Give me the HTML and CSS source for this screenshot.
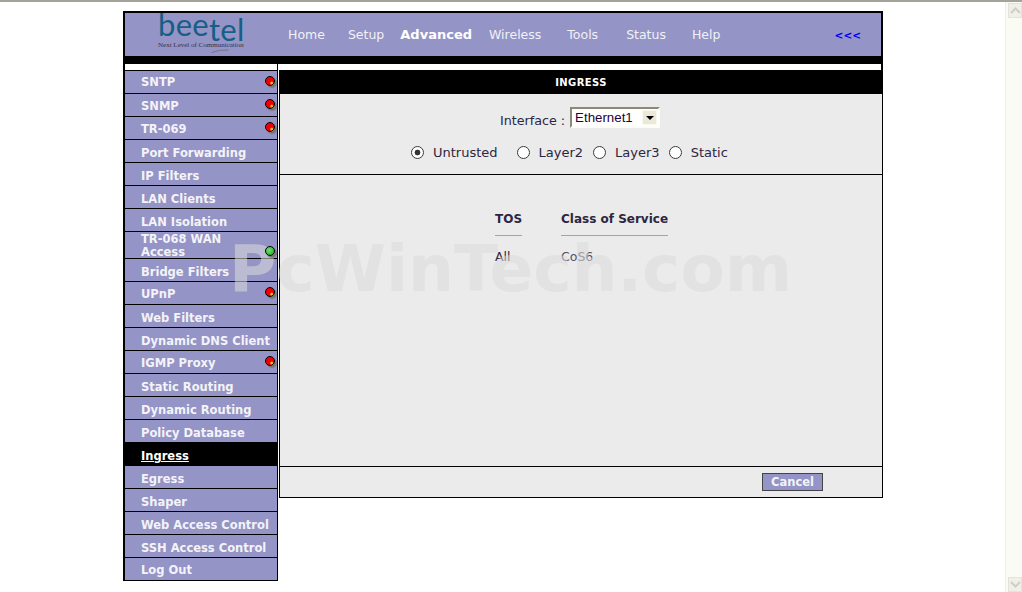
FILE: index.html
```html
<!DOCTYPE html>
<html>
<head>
  <title>Ingress</title>
  <link rel="stylesheet" href="styles.css">
</head>
<body>

  <div class="window">
    <div class="page">
      <div class="frame">

        <div class="header">
          <div class="logo">
            <div class="logo-word">bee<span class="logo-tail">tel</span></div>
            <div class="logo-tag">Next Level of Communication</div>
            <svg class="logo-swoosh" width="18" height="4" viewBox="0 0 18 4"><path d="M0.5 3.5 Q8 0.5 17.5 1" fill="none" stroke="#666" stroke-width="0.7"/></svg>
          </div>
          <ul class="nav">
            <li class="nav-home">Home</li>
            <li class="nav-setup">Setup</li>
            <li class="nav-advanced">Advanced</li>
            <li class="nav-wireless">Wireless</li>
            <li class="nav-tools">Tools</li>
            <li class="nav-status">Status</li>
            <li class="nav-help">Help</li>
          </ul>
          <a class="collapse">&lt;&lt;&lt;</a>
        </div>
        <div class="band"></div>
        <div class="strip"><div class="strip-left"></div></div>

        <div class="columns">
          <ul class="side">
            <li class="first">SNTP<i class="led"></i></li>
            <li class="up">SNMP<i class="led"></i></li>
            <li class="up">TR-069<i class="led"></i></li>
            <li>Port Forwarding</li>
            <li>IP Filters</li>
            <li>LAN Clients</li>
            <li>LAN Isolation</li>
            <li class="tall">TR-068 WAN Access<i class="led green"></i></li>
            <li>Bridge Filters</li>
            <li class="up">UPnP<i class="led"></i></li>
            <li>Web Filters</li>
            <li>Dynamic DNS Client</li>
            <li class="up">IGMP Proxy<i class="led"></i></li>
            <li>Static Routing</li>
            <li>Dynamic Routing</li>
            <li>Policy Database</li>
            <li class="current">Ingress</li>
            <li>Egress</li>
            <li>Shaper</li>
            <li>Web Access Control</li>
            <li>SSH Access Control</li>
            <li class="up">Log Out</li>
          </ul>

          <div class="main">
            <div class="title">INGRESS</div>
            <div class="form">
              <div class="iface">
                <span class="iface-label">Interface :</span>
                <div class="select">
                  <span class="select-value">Ethernet1</span>
                  <span class="select-arrow"></span>
                </div>
              </div>
              <div class="radios">
                <label class="radio-first"><input type="radio" name="kind" checked>Untrusted</label>
                <label><input type="radio" name="kind">Layer2</label>
                <label class="radio-third"><input type="radio" name="kind">Layer3</label>
                <label><input type="radio" name="kind">Static</label>
              </div>
            </div>
            <div class="content">
              <table class="tos">
                <tr><th>TOS</th><th>Class of Service</th></tr>
                <tr><td class="dark">All</td><td>CoS6</td></tr>
              </table>
            </div>
            <div class="footer">
              <button class="cancel">Cancel</button>
            </div>
          </div>
        </div>

      </div>
      <div class="watermark">PcWinTech.com</div>
    </div>

    <div class="scrollbar">
      <div class="scroll-btn"><svg width="11" height="7" viewBox="0 0 11 7"><path d="M1 6 L5.5 1.5 L10 6" fill="none" stroke="#cfcfc4" stroke-width="2"/></svg></div>
      <div class="scroll-btn"><svg width="11" height="7" viewBox="0 0 11 7"><path d="M1 1 L5.5 5.5 L10 1" fill="none" stroke="#cfcfc4" stroke-width="2"/></svg></div>
    </div>
  </div>

</body>
</html>
```

FILE: styles.css
```css
html, body {
  margin: 0;
  padding: 0;
  background: #fff;
}

body {
  font-family: "DejaVu Sans", Verdana, sans-serif;
  font-size: 13px;
  color: #2d2640;
}

ul {
  list-style: none;
  margin: 0;
  padding: 0;
}

.window {
  display: flex;
  height: 590px;
  overflow: hidden;
  border-top: 2px solid #a5a297;
}

.page {
  position: relative;
  width: 1005px;
  padding: 9px 0 0 123px;
  box-sizing: border-box;
}

.frame {
  width: 760px;
}

/* Шапка */
.header {
  display: flex;
  align-items: center;
  height: 43px;
  background: #9594c6;
  border: 2px solid #000;
  border-bottom: none;
}

.logo {
  position: relative;
  width: 163px;
  height: 43px;
  flex: none;
}

.logo-word {
  position: absolute;
  left: 33px;
  top: -9px;
  font-family: "Lato", sans-serif;
  font-size: 31px;
  line-height: 40px;
  letter-spacing: 0.3px;
  color: #155f87;
  white-space: nowrap;
}

.logo-tail {
  position: relative;
  top: 5px;
}

.logo-tag {
  position: absolute;
  left: 33px;
  top: 28px;
  font-family: "Liberation Serif", serif;
  font-size: 7px;
  color: #33334a;
  white-space: nowrap;
}

.logo-swoosh {
  position: absolute;
  left: 86px;
  top: 36px;
}

.nav {
  display: flex;
  align-items: center;
  color: #f1f1f6;
  font-size: 12.5px;
}

.nav-setup { margin-left: 23px; }
.nav-advanced { margin-left: 16px; font-weight: bold; font-size: 13px; color: #fff; }
.nav-wireless { margin-left: 17px; }
.nav-tools { margin-left: 26px; }
.nav-status { margin-left: 28px; }
.nav-help { margin-left: 26px; }

.collapse {
  margin-left: auto;
  margin-right: 20px;
  color: #0000ff;
  font-size: 10.5px;
  font-weight: bold;
}

.band {
  height: 8px;
  background: #000;
}

.strip {
  height: 6px;
  box-sizing: border-box;
  border-left: 2px solid #000;
  border-right: 2px solid #000;
}

.strip-left {
  width: 152px;
  height: 6px;
  border-right: 1px solid #000;
}

.columns {
  display: flex;
  align-items: flex-start;
}

/* Боковое меню */
.side {
  width: 155px;
  box-sizing: border-box;
  border-left: 2px solid #000;
  border-right: 1px solid #000;
  border-bottom: 1px solid #000;
  flex: none;
}

.side li {
  position: relative;
  height: 23px;
  box-sizing: border-box;
  border-top: 1px solid #000;
  padding: 6px 0 0 16px;
  background: #9594c6;
  color: #f3f3f8;
  font-size: 11.5px;
  line-height: 14px;
  font-weight: bold;
}

.side li.first {
  padding-top: 4px;
}

.side li.up {
  padding-top: 5px;
}

.side li.tall {
  height: 27px;
  padding-top: 1px;
  line-height: 13px;
  padding-right: 30px;
}

.side li.current {
  background: #000;
  color: #fff;
  text-decoration: underline;
}

.led {
  position: absolute;
  z-index: 2;
  right: 2px;
  top: 5px;
  width: 8px;
  height: 8px;
  border: 1px solid #000;
  border-radius: 50%;
  background: radial-gradient(circle at 72% 78%, #f5c020 0, #f5c020 10%, #f00000 24%);
  box-shadow: 2px 2px 1px #777;
}

.led.green {
  top: 14px;
  background: radial-gradient(circle at 40% 40%, #6fe06f 0, #2fb82f 70%);
}

/* Основная часть */
.main {
  width: 604px;
  margin-left: 1px;
  box-sizing: border-box;
  background: #ebebeb;
  border-left: 1px solid #000;
  border-right: 1px solid #000;
  border-bottom: 1px solid #000;
  flex: none;
}

.title {
  height: 24px;
  background: #000;
  color: #fff;
  font-size: 10px;
  letter-spacing: 0.4px;
  font-weight: bold;
  text-align: center;
  line-height: 25px;
}

.form {
  height: 81px;
  box-sizing: border-box;
  border-bottom: 1px solid #000;
  padding-top: 13px;
}

.iface {
  display: flex;
  justify-content: center;
  align-items: flex-start;
  gap: 5px;
  margin-right: 2px;
}

.iface-label {
  padding-top: 6px;
  font-size: 12.7px;
}

.select {
  display: flex;
  width: 90px;
  height: 21px;
  box-sizing: border-box;
  background: #fff;
  border: 2px solid;
  border-color: #8c8976 #fdfdf8 #fdfdf8 #8c8976;
  padding-right: 1px;
}

.select-value {
  flex: 1;
  padding-left: 3px;
  font-family: "Liberation Sans", sans-serif;
  font-size: 13.3px;
  line-height: 18px;
  color: #24003c;
}

.select-arrow {
  position: relative;
  width: 15px;
  height: 15px;
  margin-top: 1px;
  background: #ece9d8;
  border: 1px solid #f8f7f0;
  box-sizing: border-box;
}

.select-arrow::after {
  content: "";
  position: absolute;
  left: 3px;
  top: 5px;
  border-left: 4px solid transparent;
  border-right: 4px solid transparent;
  border-top: 4px solid #000;
}

.radios {
  display: flex;
  align-items: center;
  margin: 17px 0 0 131px;
}

.radios label {
  display: flex;
  align-items: center;
  margin-right: 10px;
}

.radios .radio-first {
  margin-right: 19px;
}

.radios .radio-third {
  margin-right: 9px;
}

.radios input {
  appearance: none;
  width: 13px;
  height: 13px;
  margin: 0 9px 0 0;
  border: 1px solid #3c3c3c;
  border-radius: 50%;
  background: #fff;
}

.radios input:checked {
  background: radial-gradient(circle, #333 0, #333 2.6px, #fff 3.2px);
}

.content {
  height: 292px;
  box-sizing: border-box;
  border-bottom: 1px solid #000;
  padding: 36px 0 0 176px;
}

.tos {
  border-collapse: separate;
  border-spacing: 39px 0;
}

.tos th {
  padding: 1px 0 9px;
  text-align: left;
  font-size: 12px;
  border-bottom: 1px solid #aaa58f;
}

.tos td {
  padding: 13px 0 0;
  font-size: 12.5px;
  color: #555066;
}

.tos td.dark {
  color: #2d2640;
}

.footer {
  height: 30px;
  box-sizing: border-box;
  padding: 6px 0 0 482px;
}

.cancel {
  display: block;
  width: 61px;
  height: 18px;
  padding: 0;
  background: #9594c6;
  border: 1px solid #444;
  color: #f3f3f8;
  font-family: "DejaVu Sans", sans-serif;
  font-size: 11.5px;
  font-weight: bold;
}

/* Водяной знак */
.watermark {
  position: absolute;
  z-index: 1;
  left: 229px;
  top: 229px;
  font-size: 64.6px;
  font-weight: bold;
  line-height: 76px;
  color: rgba(218, 218, 218, 0.55);
  white-space: nowrap;
  pointer-events: none;
}

/* Полоса прокрутки */
.scrollbar {
  display: flex;
  flex-direction: column;
  justify-content: space-between;
  width: 17px;
  height: 590px;
  padding: 1px 1px 0 2px;
  box-sizing: border-box;
  background: #fbfbf6;
  border-left: 1px solid #eeeee6;
}

.scroll-btn {
  display: flex;
  align-items: center;
  justify-content: center;
  width: 14px;
  height: 15px;
  background: #f1f0e8;
  border: 1px solid #e4e3d8;
  box-sizing: border-box;
}
```
